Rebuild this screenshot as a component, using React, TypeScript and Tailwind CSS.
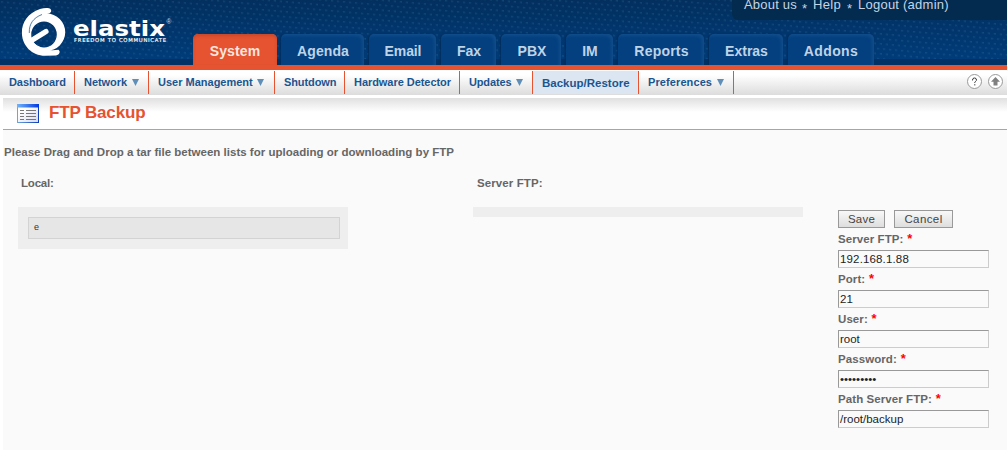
import React from "react";

const tabs = [
  { label: "System", box: "w-[84px]", track: "tracking-[0.1px]" },
  { label: "Agenda", box: "ml-1 w-[83px] pl-px", track: "tracking-[0.1px]" },
  { label: "Email", box: "ml-[5px] w-[67px] pl-px", track: "tracking-[-0.1px]" },
  { label: "Fax", box: "ml-[5px] w-[55px] pl-px", track: "" },
  { label: "PBX", box: "ml-[5px] w-[60px] pl-0.5", track: "" },
  { label: "IM", box: "ml-[5px] w-[47px] pl-px", track: "" },
  { label: "Reports", box: "ml-[5px] w-[86px] pl-px", track: "tracking-[0.2px]" },
  { label: "Extras", box: "ml-[5px] w-[74px] pl-px", track: "" },
  { label: "Addons", box: "ml-[5px] w-[86px]", track: "tracking-[0.4px]" },
];

const subItems = [
  { label: "Dashboard", box: "w-[75px] pl-[9px]", track: "tracking-[-0.07px]" },
  { label: "Network", box: "w-[74px] pl-[9px]", track: "tracking-[-0.05px]", arrow: true },
  { label: "User Management", box: "w-[126px] pl-[9px]", track: "", arrow: true },
  { label: "Shutdown", box: "w-[70px] pl-[9px]", track: "tracking-[-0.1px]" },
  { label: "Hardware Detector", box: "w-[115px] pl-[9px]", track: "tracking-[-0.05px]" },
  { label: "Updates", box: "w-[73px] pl-[9px]", track: "tracking-[-0.15px]", arrow: true },
  { label: "Backup/Restore", box: "w-[106px] pl-[9px]", track: "", active: true },
  { label: "Preferences", box: "w-[95px] pl-[9px]", track: "tracking-[0.1px]", arrow: true },
];

const fields = [
  { label: "Server FTP:", value: "192.168.1.88", track: "tracking-[0.15px]" },
  { label: "Port:", value: "21", track: "tracking-[0.2px]" },
  { label: "User:", value: "root", track: "tracking-[-0.05px]" },
  { label: "Password:", value: "•••••••••", track: "" },
  { label: "Path Server FTP:", value: "/root/backup", track: "" },
];

function Dots() {
  return (
    <svg className="absolute inset-0" width="1007" height="65" aria-hidden="true">
      <defs>
        <pattern id="dots" width="6" height="10" patternUnits="userSpaceOnUse" patternTransform="skewY(5)">
          <rect x="1" y="1" width="2" height="1.5" fill="#4383ad" opacity=".27" />
          <rect x="4" y="6" width="2" height="1.5" fill="#4383ad" opacity=".27" />
        </pattern>
        <linearGradient id="base" x1="0" y1="0" x2="0" y2="1">
          <stop offset="0" stopColor="#022f5e" />
          <stop offset="1" stopColor="#003d7c" />
        </linearGradient>
      </defs>
      <rect width="1007" height="65" fill="url(#base)" />
      <rect width="1007" height="59" fill="url(#dots)" />
      <rect y="59" width="1007" height="6" fill="#002c5c" opacity=".65" />
    </svg>
  );
}

function Logo() {
  return (
    <svg className="absolute left-0 top-0" width="190" height="65" aria-label="elastix">
      <path
        fillRule="evenodd"
        fill="#fff"
        d="M46.500 13.500a18.700 18.700 0 1 1 0 37.400a18.700 18.700 0 1 1 0-37.400zM44 21.500a12.800 13 0 1 0 0 26a12.800 13 0 1 0 0-26z"
      />
      <path
        fill="#fff"
        d="M50.500 9C49 7.500 44 7.800 40 9C28 13 21.700 22 21.900 33C22.200 46 32 55.500 45 55.800L56 55.500C60 54.500 60.500 51.500 58.500 49.800C52 50.500 46 50.500 40 47C33 44 29 38 29.500 31C30 22 38 16 49 13.500C51.500 12.500 51.800 10.500 50.500 9z"
      />
      <path d="M31.500 40.500L46 31.500" fill="none" stroke="#fff" strokeWidth="5.200" strokeLinecap="round" />
      <path d="M29.300 33C29 24 33 18 42 14.500" fill="none" stroke="#2c5f94" strokeWidth=".8" />
      <text x="73" y="36" textLength="92" lengthAdjust="spacingAndGlyphs" fill="#fff" fontFamily="DejaVu Sans" fontWeight="700" fontSize="20.500">elastix</text>
      <text x="166.500" y="24" fill="#cfdeeb" fontFamily="Liberation Sans" fontSize="6.500">®</text>
      <text x="74" y="41.500" textLength="92" fill="#fff" stroke="#fff" strokeWidth=".15" fontFamily="DejaVu Sans" fontSize="5.300">FREEDOM TO COMMUNICATE</text>
    </svg>
  );
}

function ListIcon() {
  return (
    <svg width="22" height="19" viewBox="0 0 22 19" aria-hidden="true">
      <defs>
        <linearGradient id="bar">
          <stop offset="0" stopColor="#71b5fb" />
          <stop offset="1" stopColor="#0038e2" />
        </linearGradient>
        <linearGradient id="paper" x1="0" y1="0" x2="1" y2="1">
          <stop offset=".3" stopColor="#fff" />
          <stop offset="1" stopColor="#d5daf4" />
        </linearGradient>
        <linearGradient id="frame">
          <stop offset="0" stopColor="#6aa5dc" />
          <stop offset="1" stopColor="#123fb5" />
        </linearGradient>
      </defs>
      <rect x=".5" y=".5" width="21" height="18" fill="url(#paper)" stroke="url(#frame)" />
      <rect width="22" height="3.500" fill="url(#bar)" />
      <path d="M3 6.500h4M3 9.500h4M3 12.500h4M3 15.500h4M9 6.500h10M9 9.500h10M9 12.500h10M9 15.500h10" stroke="#777" />
    </svg>
  );
}

export default function App() {
  return (
    <div className="h-[450px] w-[1007px] overflow-hidden bg-white font-['Liberation_Sans',sans-serif] text-[11.5px] text-[#666]">
      <header className="relative h-[65px] overflow-hidden">
        <Dots />
        <Logo />
        <div className="absolute right-0 top-0 h-5 w-[275px] rounded-bl-md bg-[#032b4f] pl-3 text-[13px] leading-[10px] text-[#c3d5e5]">
          <div className="flex whitespace-pre">
            <span className="w-[60px] tracking-[0.2px]">About us</span>
            <span className="-ml-0.5 mr-0.5 w-[9px] pt-1">*</span>
            <span className="w-[36px] tracking-[0.3px]">Help</span>
            <span className="-ml-0.5 mr-0.5 w-[9px] pt-1">*</span>
            <span className="tracking-[0.24px]">Logout (admin)</span>
          </div>
        </div>
        <nav className="relative flex pl-[193px] pt-[34px]">
          {tabs.map((t, i) => (
            <a
              key={t.label}
              className={`flex h-[31px] items-center justify-center rounded-t-[5px] pt-[3px] text-[14px] font-bold ${t.box} ${t.track} ${
                i === 0
                  ? "bg-[#e55330] text-[#fbe5df] shadow-[inset_0_2px_3px_#c9482b]"
                  : "bg-[#044080] text-[#bfd3e6] shadow-[inset_-2px_2px_3px_#114d89,-1px_0_2px_#002c59]"
              }`}
            >
              {t.label}
            </a>
          ))}
        </nav>
      </header>
      <div className="h-[5px] bg-[#e55330]" />
      <div className="flex h-[25px] justify-between bg-linear-to-b from-white from-20% to-[#dcdcdc] pt-px">
        <nav className="flex h-[23px]">
          {subItems.map((s) => (
            <a
              key={s.label}
              className={`flex items-center whitespace-nowrap border-r border-[#e55330] font-bold text-[#1b5590] ${s.box} ${s.track} ${
                s.active ? "bg-[#dce6f2] pt-0.5 text-[11.5px]" : "text-[11px]"
              }`}
            >
              {s.label}
              {s.arrow && (
                <svg className="ml-[4.500px]" width="7" height="7" aria-hidden="true">
                  <path d="M0 0h7L3.500 7z" fill="#5f8fb9" />
                </svg>
              )}
            </a>
          ))}
        </nav>
        <div className="flex gap-[5px] pr-[3px] pt-[3px]">
          <svg width="16" height="16" aria-hidden="true">
            <circle cx="7.500" cy="7.500" r="7" fill="#fff" stroke="#999" />
            <path d="M5.500 6.500V5h1V4h2v1h1v1.500L7.800 8v1M7.800 10v1.500" fill="none" stroke="#555" />
          </svg>
          <svg width="16" height="16" aria-hidden="true">
            <circle cx="7.500" cy="7.500" r="7" fill="#fff" stroke="#999" />
            <path d="M7.500 3l4.500 4.800H9.500v3.700h-4V7.800H3z" fill="#808080" />
          </svg>
        </div>
      </div>
      <main className="ml-[3px] mt-[3px] h-[352px] bg-[#fafafa]">
        <div className="flex h-8 items-start border-b border-[#a6a6a6] bg-linear-to-b from-[#e0e0e0] to-white to-45% pl-[14px] pt-[6px]">
          <ListIcon />
          <h1 className="-mt-px ml-[10px] text-[17px] leading-[19px] font-bold tracking-[-0.15px] text-[#e55330]">FTP Backup</h1>
        </div>
        <p className="h-[31px] whitespace-nowrap pl-px pt-[15px] leading-[15px] font-bold tracking-[0.01px]">
          Please Drag and Drop a tar file between lists for uploading or downloading by FTP
        </p>
        <div className="flex pt-[15px]">
          <section className="ml-[15px] w-[330px]">
            <h2 className="pl-[3px] leading-[15px] font-bold tracking-[-0.2px]">Local:</h2>
            <ul className="mt-[16px] bg-[#eee] p-[10px] pr-2">
              <li className="h-[22px] border border-[#d3d3d3] bg-[#e6e6e6] pl-[5px] text-[9px] leading-[19px] text-[#333]">e</li>
            </ul>
          </section>
          <section className="ml-[125px] w-[330px]">
            <h2 className="pl-1 leading-[15px] font-bold tracking-[0.1px]">Server FTP:</h2>
            <ul className="mt-[16px] h-[10px] bg-[#eee]" />
          </section>
          <form className="ml-[35px] w-[151px] pt-[34px]">
            <div className="flex gap-[9px] text-[#444]">
              <button type="button" className="h-[18px] w-[47px] border border-[#999] bg-linear-to-b from-[#f8f8f8] to-[#dedede] leading-[16px] tracking-[0.2px]">Save</button>
              <button type="button" className="h-[18px] w-[59px] border border-[#999] bg-linear-to-b from-[#f8f8f8] to-[#dedede] leading-[16px] tracking-[0.4px]">Cancel</button>
            </div>
            {fields.map((f) => (
              <div key={f.label} className="h-10">
                <div className="h-[22px] whitespace-pre pt-[3px] leading-[15px] font-bold tracking-[0.08px]">
                  {f.label} <span className="ml-[0.5px] text-[13px] text-[#f00]">*</span>
                </div>
                <div className={`h-[18px] border border-[#ccc] border-l-[#999] border-t-[#999] bg-[#fafafa] pl-px leading-[16px] text-[#222] ${f.track}`}>
                  {f.value}
                </div>
              </div>
            ))}
          </form>
        </div>
      </main>
    </div>
  );
}
